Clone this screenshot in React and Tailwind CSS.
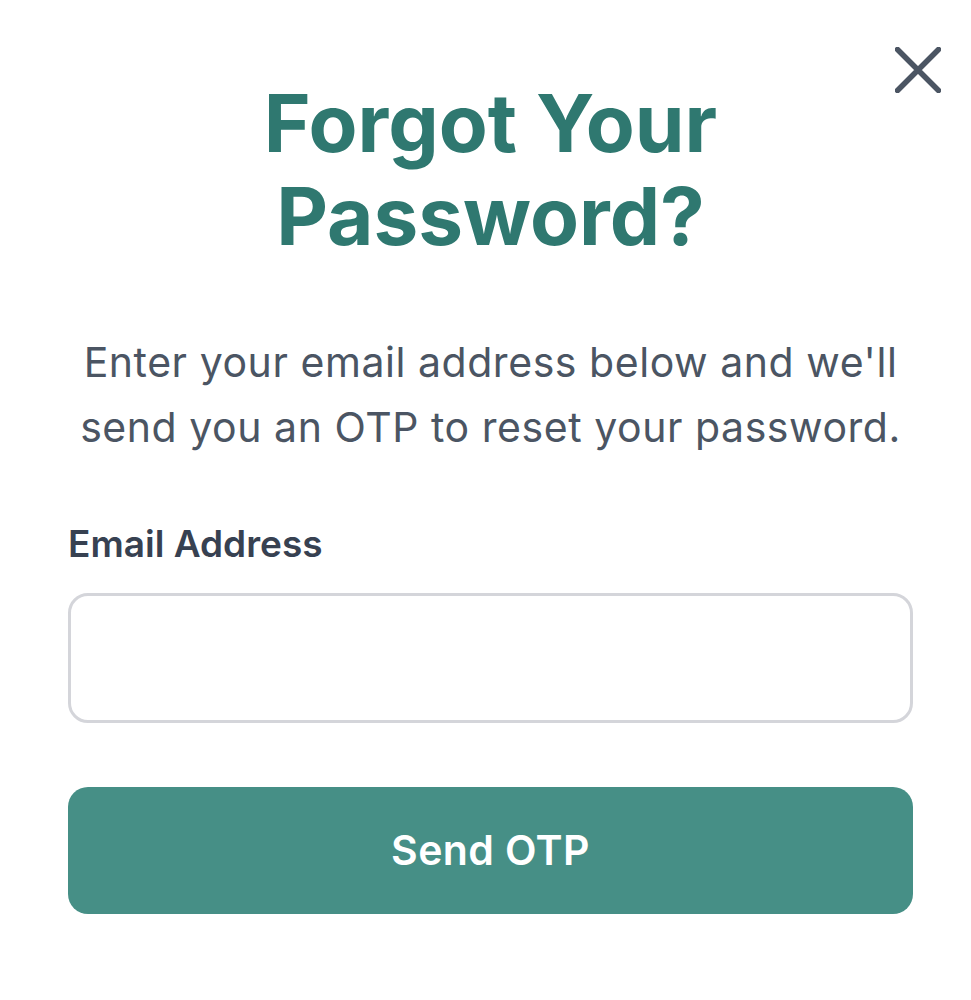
export default function App() {
  return (
    <div className="min-h-[1000px] w-full bg-white font-['Inter','Noto_Sans',sans-serif]">
      <div className="relative pl-[68px] pr-[58px] pt-[76px] pb-[85px]">
        {/* close */}
        <button type="button" className="absolute top-[47px] right-[30px] text-[#4b5563]">
          <svg width="46" height="46" viewBox="0 0 46 46" fill="none">
            <path d="M2.5 2.5L43.5 43.5M43.5 2.5L2.5 43.5" stroke="currentColor" strokeWidth="5.5" strokeLinecap="round" />
          </svg>
        </button>

        <h1 className="text-center text-[80px] leading-[93px] font-bold text-[#2f7870]">
          Forgot Your
          <br />
          Password?
        </h1>

        <p className="mt-[68px] text-center text-[41px] leading-[65px] tracking-[0.55px] text-[#4b5563]">
          Enter your email address below and we'll send you an OTP to reset your password.
        </p>

        <div className="mt-[60px]">
          <label className="block text-[37px] leading-[48px] font-semibold text-[#374151]">
            Email Address
          </label>
          <input
            type="email"
            className="mt-[25px] block h-[130px] w-full rounded-[20px] border-[3px] border-[#d4d5da] bg-white px-6 text-[40px] outline-none"
          />
        </div>

        <button
          type="button"
          className="mt-[64px] flex h-[127px] w-full items-center justify-center rounded-[20px] bg-[#468f86] text-[41px] tracking-[0.4px] font-semibold text-white"
        >
          Send OTP
        </button>
      </div>
    </div>
  );
}
